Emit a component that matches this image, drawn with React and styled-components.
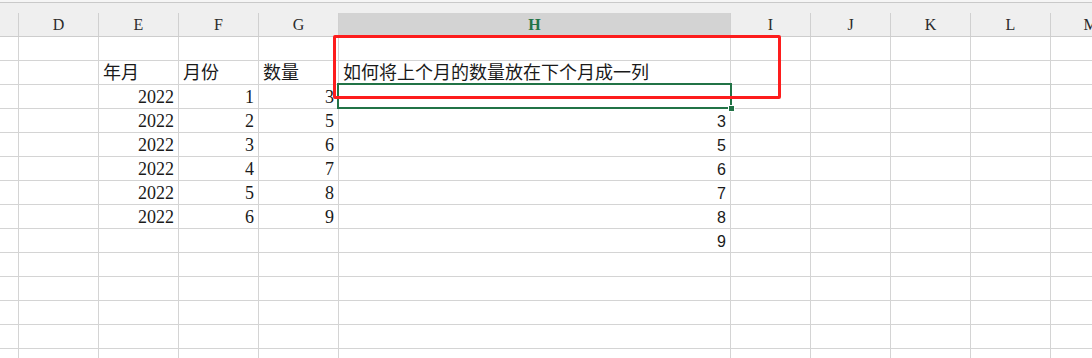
import React from "react";
import styled, { createGlobalStyle } from "styled-components";

const GlobalStyle = createGlobalStyle`
  html, body {
    margin: 0;
    padding: 0;
    background: #ffffff;
  }
  body {
    overflow: hidden;
  }
`;

const COLUMNS = "19px 80px 80px 80px 80px 392px 80px 80px 80px 80px 80px";
const LETTERS = ["", "D", "E", "F", "G", "H", "I", "J", "K", "L", "M"];
const ACTIVE_COL = "H";
const ACTIVE_ROW = 2;
const NOTE_ROW = 0;

// row data keyed by column letter
const ROWS = [
  {},
  { E: "年月", F: "月份", G: "数量", H: "如何将上个月的数量放在下个月成一列" },
  { E: 2022, F: 1, G: 3 },
  { E: 2022, F: 2, G: 5, H: 3 },
  { E: 2022, F: 3, G: 6, H: 5 },
  { E: 2022, F: 4, G: 7, H: 6 },
  { E: 2022, F: 5, G: 8, H: 7 },
  { E: 2022, F: 6, G: 9, H: 8 },
  { H: 9 },
  {},
  {},
  {},
  {},
  {},
];

const Sheet = styled.div`
  width: 1092px;
  height: 358px;
  overflow: hidden;
  background: #ffffff;
`;

const TopEdge = styled.div`
  height: 2px;
  background: #f5f5f5;
  border-bottom: 1px solid #c9c9c9;
`;

const HeaderRow = styled.div`
  display: grid;
  grid-template-columns: ${COLUMNS};
  align-items: end;
  height: 33px;
  background: #efefef;
  border-bottom: 1px solid #cdcdcd;
`;

const HeaderCell = styled.div`
  height: 23px;
  line-height: 24px;
  text-align: center;
  border-right: 1px solid #d0d0d0;
  background: ${(p) => (p.$active ? "#d3d3d3" : "transparent")};
  color: ${(p) => (p.$active ? "#217346" : "#2b2b2b")};
  font-family: "Liberation Serif", serif;
  font-size: 16px;
  font-weight: ${(p) => (p.$active ? 700 : 400)};
`;

const Row = styled.div`
  display: grid;
  grid-template-columns: ${COLUMNS};
  height: 24px;
`;

const Cell = styled.div`
  position: relative;
  box-sizing: border-box;
  height: 24px;
  padding: ${(p) => (p.$sans ? "2px 4px 0" : "1px 4px 0")};
  border-right: 1px solid #d4d4d4;
  border-bottom: 1px solid #d4d4d4;
  line-height: 22px;
  white-space: nowrap;
  text-align: ${(p) => (p.$number ? "right" : "left")};
  color: #1a1a1a;
  font-family: ${(p) =>
    p.$sans
      ? '"Liberation Sans", Arial, sans-serif'
      : '"Liberation Serif", "Noto Sans CJK SC", serif'};
  font-size: ${(p) => (p.$sans ? "16px" : "18px")};
`;

/* green frame round the active cell, drawn over the grid lines */
const Selection = styled.div`
  position: absolute;
  left: -2px;
  top: -2px;
  width: 391px;
  height: 22px;
  border: 2px solid #217346;
  pointer-events: none;
  z-index: 1;
`;

const FillHandle = styled.div`
  position: absolute;
  right: -5px;
  bottom: -5px;
  width: 5px;
  height: 5px;
  background: #217346;
  border: 1px solid #ffffff;
`;

/* red hand-drawn box round the question */
const Callout = styled.div`
  position: absolute;
  left: -6px;
  top: -2px;
  width: 442px;
  height: 58px;
  border: 3px solid #fd1d1d;
  border-radius: 2px;
  pointer-events: none;
  z-index: 2;
`;

function SheetRow({ data, index }) {
  return (
    <Row>
      {LETTERS.map((col, i) => {
        const value = data[col];
        const isNumber = typeof value === "number";
        const isActive = col === ACTIVE_COL;
        return (
          <Cell key={i} $number={isNumber} $sans={isActive && isNumber}>
            {value}
            {isActive && index === NOTE_ROW && <Callout />}
            {isActive && index === ACTIVE_ROW && (
              <Selection>
                <FillHandle />
              </Selection>
            )}
          </Cell>
        );
      })}
    </Row>
  );
}

export default function App() {
  return (
    <>
      <GlobalStyle />
      <Sheet>
        <TopEdge />
        <HeaderRow>
          {LETTERS.map((col, i) => (
            <HeaderCell key={i} $active={col === ACTIVE_COL}>
              {col}
            </HeaderCell>
          ))}
        </HeaderRow>
        {ROWS.map((data, i) => (
          <SheetRow key={i} index={i} data={data} />
        ))}
      </Sheet>
    </>
  );
}
